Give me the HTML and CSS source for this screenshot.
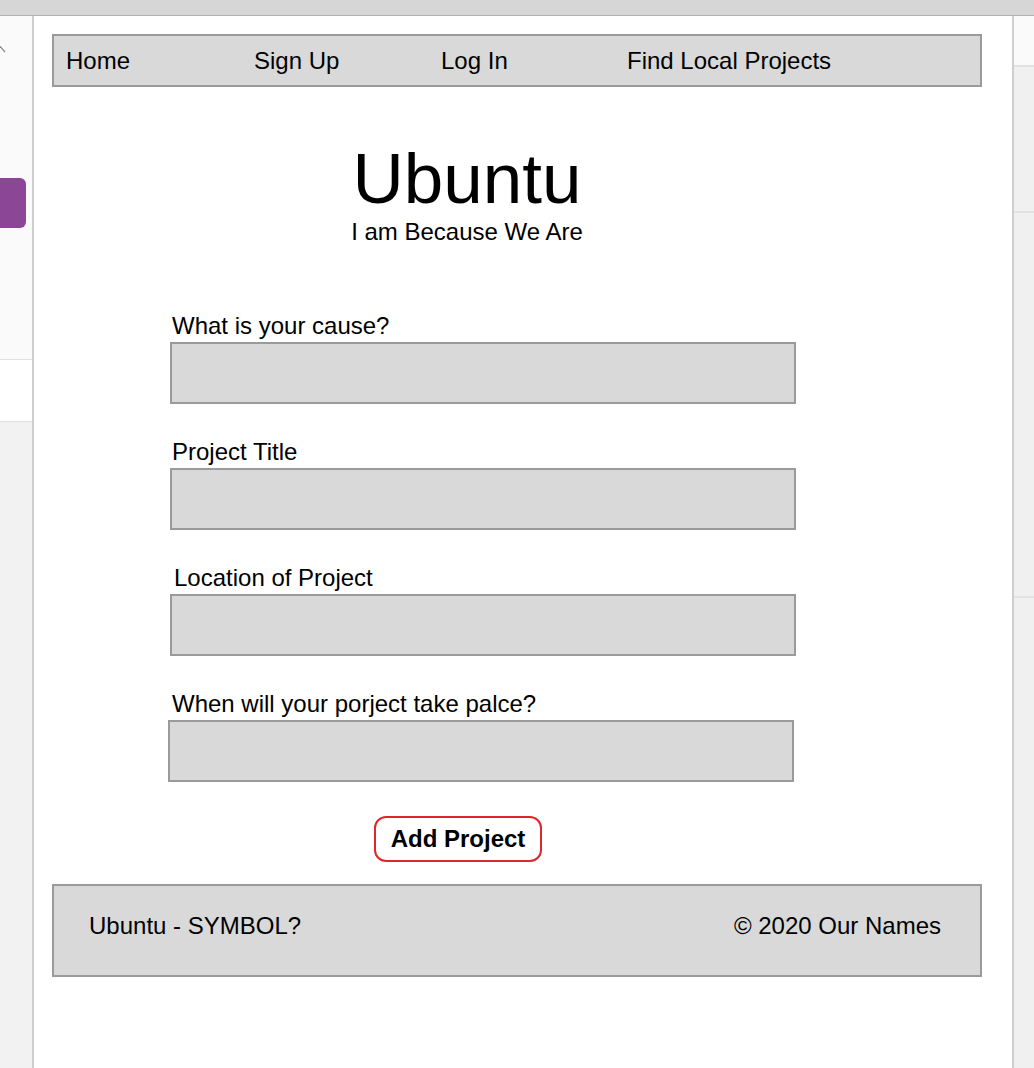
FILE: index.html
```html
<!DOCTYPE html>
<html lang="en">
<head>
<meta charset="utf-8">
<title>Ubuntu wireframe</title>
<link rel="stylesheet" href="styles.css">
</head>
<body>
<div class="app">
  <div class="topbar"></div>
  <div class="workspace">
    <aside class="left-panel">
      <div class="lp-top">
        <svg class="chevron" width="8" height="14" viewBox="0 0 8 14"><path d="M-3 1 L5 10" stroke="#8a8a8a" stroke-width="1.3" fill="none"/></svg>
        <div class="purple-btn"></div>
      </div>
      <div class="lp-mid"></div>
      <div class="lp-bottom"></div>
    </aside>
    <main class="canvas">
      <nav class="nav">
        <a class="nav-item nav-home">Home</a>
        <a class="nav-item nav-signup">Sign Up</a>
        <a class="nav-item nav-login">Log In</a>
        <a class="nav-item">Find Local Projects</a>
      </nav>
      <header class="hero">
        <h1 class="title">Ubuntu</h1>
        <p class="subtitle">I am Because We Are</p>
      </header>
      <form class="form">
        <div class="field">
          <label class="label">What is your cause?</label>
          <div class="input"></div>
        </div>
        <div class="field">
          <label class="label">Project Title</label>
          <div class="input"></div>
        </div>
        <div class="field">
          <label class="label label-shift">Location of Project</label>
          <div class="input"></div>
        </div>
        <div class="field field-shift">
          <label class="label label-back">When will your porject take palce?</label>
          <div class="input"></div>
        </div>
        <div class="actions">
          <button type="button" class="btn">Add Project</button>
        </div>
      </form>
      <footer class="footer">
        <span>Ubuntu - SYMBOL?</span>
        <span>© 2020 Our Names</span>
      </footer>
    </main>
    <aside class="right-panel">
      <div class="rp-a"></div>
      <div class="rp-b"></div>
      <div class="rp-c"></div>
      <div class="rp-d"></div>
    </aside>
  </div>
</div>
</body>
</html>
```

FILE: styles.css
```css
* { box-sizing: border-box; }
html, body { margin: 0; padding: 0; }
body {
  width: 1034px;
  height: 1068px;
  overflow: hidden;
  font-family: "Liberation Sans", Arial, Helvetica, sans-serif;
  color: #000;
  background: #fff;
}
.app { display: flex; flex-direction: column; height: 1068px; }
.topbar {
  height: 16px;
  background: #d6d6d6;
  border-bottom: 1px solid #b3b3b3;
  flex: none;
}
.workspace { display: flex; flex: 1; min-height: 0; }

.left-panel {
  width: 34px;
  flex: none;
  border-right: 2px solid #cfcfcf;
  display: flex;
  flex-direction: column;
  background: #f2f2f2;
}
.lp-top {
  height: 344px;
  background: #fafafa;
  border-bottom: 1px solid #e0e0e0;
  position: relative;
}
.chevron { position: absolute; left: 0; top: 26px; }
.purple-btn {
  margin-top: 162px;
  width: 26px;
  height: 50px;
  background: #8b4696;
  border-radius: 0 6px 6px 0;
}
.lp-mid {
  height: 62px;
  background: #fff;
  border-bottom: 1px solid #e0e0e0;
}
.lp-bottom { flex: 1; background: #f2f2f2; }

.canvas {
  width: 978px;
  flex: none;
  background: #fff;
  padding: 18px 0 0 18px;
  display: flex;
  flex-direction: column;
  align-items: flex-start;
}

.nav {
  width: 930px;
  height: 53px;
  background: #d9d9d9;
  border: 2px solid #9a9a9a;
  display: flex;
  align-items: center;
  padding-left: 12px;
  font-size: 24px;
}
.nav-item { color: #000; text-decoration: none; line-height: 24px; }
.nav-home { width: 188px; }
.nav-signup { width: 187px; }
.nav-login { width: 186px; }

.hero {
  margin: 56px 0 0 298px;
  width: 234px;
  text-align: center;
}
.title {
  margin: 0;
  font-size: 71px;
  font-weight: normal;
  line-height: 71px;
}
.subtitle {
  margin: 6px 0 0;
  font-size: 24px;
  line-height: 24px;
}

.form {
  margin: 0 0 0 118px;
  padding-top: 70px;
  display: flex;
  flex-direction: column;
  gap: 36px;
}
.field { display: flex; flex-direction: column; gap: 4px; }
.field-shift { margin-left: -2px; }
.label {
  font-size: 24px;
  line-height: 24px;
  padding-left: 2px;
}
.label-shift { padding-left: 4px; }
.label-back { padding-left: 4px; }
.input {
  width: 626px;
  height: 62px;
  background: #d9d9d9;
  border: 2px solid #9a9a9a;
}
.actions { margin-top: -2px; padding-left: 204px; }
.btn {
  width: 168px;
  height: 46px;
  background: #fff;
  border: 2px solid #e0262c;
  border-radius: 12px;
  font-family: "Liberation Sans", Arial, sans-serif;
  font-size: 24px;
  font-weight: bold;
  color: #000;
  padding: 0;
}

.footer {
  margin-top: 22px;
  width: 930px;
  height: 93px;
  background: #d9d9d9;
  border: 2px solid #9a9a9a;
  display: flex;
  align-items: center;
  justify-content: space-between;
  padding: 0 39px 9px 35px;
  font-size: 24px;
}

.right-panel {
  flex: 1;
  border-left: 2px solid #cfcfcf;
  display: flex;
  flex-direction: column;
}
.rp-a { height: 51px; background: #fafafa; border-bottom: 2px solid #e2e2e2; }
.rp-b { height: 146px; background: #f0f0f0; border-bottom: 2px solid #e2e2e2; }
.rp-c { height: 385px; background: #f0f0f0; border-bottom: 2px solid #e2e2e2; }
.rp-d { flex: 1; background: #f0f0f0; }
```
